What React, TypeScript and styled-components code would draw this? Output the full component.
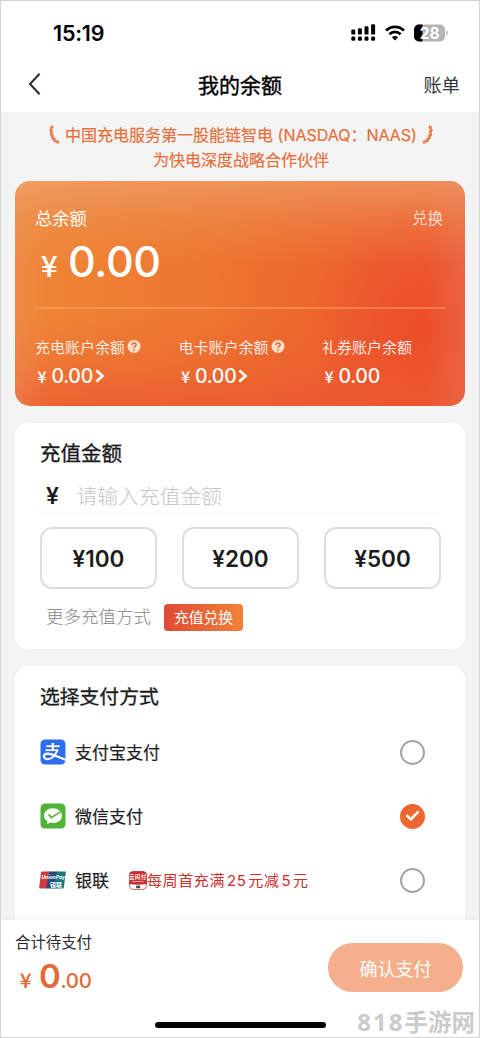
import React from 'react';
import styled, { createGlobalStyle } from 'styled-components';

const GlobalStyle = createGlobalStyle`
  * { box-sizing: border-box; }
  body { margin: 0; background: #fff; }
  button { font-family: inherit; padding: 0; margin: 0; cursor: pointer; }
`;

const Screen = styled.div`
  width: 480px;
  height: 1038px;
  border: 1px solid #d4d4d4;
  background: #f4f4f4;
  display: flex;
  flex-direction: column;
  overflow: hidden;
  position: relative;
  font-family: Inter, 'Noto Sans CJK SC', sans-serif;
  color: #1c1c1e;
  white-space: nowrap;
`;

const StatusBar = styled.div`
  flex: none;
  height: 56px;
  padding: 7px 31px 0 52px;
  display: flex;
  align-items: center;
  justify-content: space-between;
  background: #fff;
`;

const Clock = styled.span`
  font-size: 21.5px;
  font-weight: 600;
  letter-spacing: -0.2px;
  color: #000;
`;

const StatusIcons = styled.div`
  display: flex;
  align-items: center;
  gap: 9px;
`;

const NavBar = styled.div`
  flex: none;
  height: 55px;
  padding: 0 19px 2px 25px;
  display: grid;
  grid-template-columns: 60px 1fr 66px;
  align-items: center;
  background: #fff;
`;

const NavTitle = styled.span`
  text-align: center;
  font-size: 21px;
  -webkit-text-stroke: 0.4px #000;
  color: #000;
`;

const NavAction = styled.span`
  text-align: right;
  font-size: 18.2px;
  color: #33333b;
`;

const Banner = styled.div`
  flex: none;
  height: 69px;
  padding: 11px 0 0 2px;
  display: flex;
  flex-direction: column;
  align-items: center;
  color: #e4703c;
  font-size: 16px;
  line-height: 24px;
  -webkit-text-stroke: 0.2px #e4703c;
`;

const BannerLine = styled.div`
  display: flex;
  align-items: center;
  height: 24.5px;
  gap: 5px;
`;

const BalanceCard = styled.section`
  flex: none;
  width: 450px;
  height: 225px;
  margin-left: 14px;
  border-radius: 15px;
  padding: 0 20px;
  color: #fff;
  display: flex;
  flex-direction: column;
  background:
    linear-gradient(to bottom, rgba(240, 168, 116, 0.62) 0, rgba(238, 160, 102, 0.3) 36px, rgba(238, 150, 90, 0) 84px),
    linear-gradient(to right, rgba(238, 142, 90, 0.45) 0, rgba(238, 142, 90, 0) 34px),
    linear-gradient(to left, rgba(234, 110, 82, 0.6) 0, rgba(234, 104, 74, 0) 38px),
    linear-gradient(to top, rgba(236, 86, 48, 0.75) 0, rgba(236, 86, 48, 0.3) 42px, rgba(236, 86, 48, 0) 90px),
    radial-gradient(ellipse 215px 250px at 410px 155px, rgba(236, 72, 40, 0.9) 0, rgba(236, 74, 41, 0.66) 25%, rgba(236, 78, 41, 0.26) 55%, rgba(236, 84, 41, 0) 100%),
    linear-gradient(to right, #ef8736 0, #ed7630 42%, #ec6830 100%);
`;

const CardHead = styled.div`
  height: 32px;
  margin-top: 20px;
  display: flex;
  align-items: center;
  justify-content: space-between;
  font-size: 17.3px;
  padding-right: 2px;
`;

const Redeem = styled.span`
  font-size: 15.5px;
  opacity: 0.72;
`;

const Total = styled.div`
  display: flex;
  align-items: baseline;
  height: 74px;
  padding: 1px 0 0 4px;
  line-height: 54px;
  font-size: 43px;
  font-weight: 500;
  letter-spacing: -0.3px;
`;

const Yen = styled.span<{ $size: number; $gap: number; $width?: number }>`
  font-family: 'Noto Sans CJK SC', sans-serif;
  font-size: ${(p) => p.$size}px;
  margin-right: ${(p) => p.$gap}px;
  display: inline-block;
  width: ${(p) => (p.$width ? `${p.$width}px` : 'auto')};
  text-align: center;
  -webkit-text-stroke: 0.2px currentColor;
`;

const CardRule = styled.div`
  height: 2px;
  background: rgba(255, 176, 112, 0.42);
`;

const Accounts = styled.div`
  display: grid;
  grid-template-columns: 143.5px 143.5px auto;
  margin-top: 24px;
`;

const AccountLabel = styled.div`
  display: flex;
  align-items: center;
  gap: 2px;
  height: 26px;
  font-size: 15px;
  color: rgba(255, 255, 255, 0.88);
`;

const AccountValue = styled.div`
  display: flex;
  align-items: center;
  height: 34px;
  padding-left: 1px;
  font-size: 19.5px;
  font-weight: 500;
  letter-spacing: -0.3px;
`;

const Panel = styled.section<{ $height: number }>`
  flex: none;
  width: 450px;
  height: ${(p) => p.$height}px;
  margin: 17px 0 0 14px;
  padding: 0 24px 0 25px;
  background: #fff;
  border-radius: 14px;
`;

const PanelTitle = styled.h2<{ $size: number; $height: number }>`
  margin: 0;
  height: ${(p) => p.$height}px;
  line-height: 62px;
  font-size: ${(p) => p.$size}px;
  font-weight: 400;
  -webkit-text-stroke: 0.35px #1c1c1e;
`;

const AmountField = styled.div`
  height: 35px;
  padding-bottom: 2px;
  display: flex;
  align-items: center;
  border-bottom: 1px solid #f7f7f7;
`;

const FieldYen = styled.span`
  width: 25px;
  text-align: center;
  font-size: 23px;
  font-weight: 600;
`;

const Placeholder = styled.span`
  margin: -3px 0 0 11.5px;
  font-size: 20.8px;
  font-weight: 300;
  color: #c6c6c6;
`;

const Presets = styled.div`
  margin-top: 12px;
  display: flex;
  justify-content: space-between;
`;

const Preset = styled.button`
  width: 117px;
  height: 62px;
  border: 2px solid #dedede;
  border-radius: 12px;
  background: #fff;
  font-size: 22.5px;
  font-weight: 600;
  color: #1c1c1e;
`;

const MoreRow = styled.div`
  height: 28px;
  margin-top: 14px;
  padding-left: 6px;
  display: flex;
  align-items: center;
  gap: 13px;
  line-height: 28px;
  font-size: 17.5px;
  font-weight: 300;
  color: #858585;
`;

const Tag = styled.span`
  width: 79px;
  height: 27px;
  line-height: 28px;
  border-radius: 4px;
  text-align: center;
  font-size: 14.8px;
  font-weight: 400;
  color: #fff;
  background: linear-gradient(90deg, #e04a35, #f08238);
`;

const PayRow = styled.div`
  height: 64px;
  display: flex;
  align-items: center;
  padding-right: 16px;
`;

const PayIcon = styled.div`
  width: 27px;
  height: 26px;
  margin: 0 9px 0 -1px;
  display: flex;
  align-items: center;
  justify-content: center;
`;

const PayName = styled.span`
  margin-top: -1px;
  font-size: 17px;
  -webkit-text-stroke: 0.2px #1c1c1e;
`;

const Promo = styled.span`
  display: flex;
  align-items: center;
  margin-left: 20px;
  line-height: 22px;
  font-size: 15px;
  letter-spacing: 0.6px;
  word-spacing: -2.9px;
  color: #c8312f;
`;

const PromoText = styled.span`
  margin-top: 1px;
`;

const Radio = styled.span<{ $on?: boolean }>`
  width: 25px;
  height: 25px;
  margin-left: auto;
  border-radius: 50%;
  border: ${(p) => (p.$on ? 'none' : '2px solid #a4a4a4')};
  background: ${(p) => (p.$on ? '#ec682e' : '#fff')};
  display: flex;
  align-items: center;
  justify-content: center;
`;

const Footer = styled.footer`
  position: absolute;
  left: 0;
  right: 0;
  bottom: 0;
  height: 117px;
  background: #fff;
  box-shadow: 0 -1px 8px rgba(0, 0, 0, 0.05);
  padding: 9px 16px 0 14px;
  display: flex;
  justify-content: space-between;
`;

const DueLabel = styled.div`
  height: 26px;
  line-height: 27px;
  font-size: 15.4px;
  color: #2c2c2e;
`;

const DueAmount = styled.div`
  display: flex;
  align-items: baseline;
  line-height: 42px;
  padding-left: 2px;
  color: #e26a35;
  font-size: 20.5px;
  font-weight: 500;
  letter-spacing: -0.3px;
`;

const DueWhole = styled.span`
  font-size: 33px;
  font-weight: 600;
`;

const Confirm = styled.button`
  width: 135px;
  height: 49px;
  margin-top: 14px;
  border: 0;
  border-radius: 25px;
  background: #f4b08c;
  color: #fff;
  font-size: 18px;
`;

const HomeBar = styled.div`
  position: absolute;
  left: 154px;
  bottom: 9px;
  width: 171px;
  height: 6px;
  border-radius: 3px;
  background: #000;
`;

const Watermark = styled.div`
  position: absolute;
  right: 4px;
  bottom: -1px;
  line-height: 32px;
  display: flex;
  align-items: center;
  font-family: 'Open Sans', 'Noto Sans CJK SC', sans-serif;
  font-size: 23.5px;
  font-weight: 700;
  color: #cbcbcb;
`;

const WatermarkDigits = styled.span`
  font-size: 24px;
  letter-spacing: 2px;
`;

const Signal = () => (
  <svg width="25" height="18" viewBox="0 0 25 18" fill="#000">
    {[0, 1, 2, 3].map((i) => (
      <g key={i}>
        <rect x={0.3 + i * 6.6} y={[5.6, 4.2, 2.2, 0.2][i]} width="4" height={[5, 6.4, 8.4, 10.4][i]} rx="1.2" />
        <rect x={0.3 + i * 6.6} y="12.6" width="4" height="4.2" rx="1.4" />
      </g>
    ))}
  </svg>
);

const Wifi = () => (
  <svg width="20" height="16" viewBox="0 0 20 16" fill="none" stroke="#000" strokeWidth="2.7">
    <path d="M1 5.6 C6 .5 14 .5 19 5.6" />
    <path d="M4.4 9.2 C7.6 6 12.4 6 15.6 9.2" />
    <path d="M10 15.6 L6.9 12.3 C8.6 10.7 11.4 10.7 13.1 12.3 Z" fill="#000" stroke="none" />
  </svg>
);

const Battery = () => (
  <svg width="34" height="18" viewBox="0 0 34 18">
    <defs>
      <clipPath id="cell"><rect x="0" y="0.5" width="31" height="17" rx="5" /></clipPath>
    </defs>
    <g clipPath="url(#cell)">
      <rect width="31" height="18" fill="#b4b4b4" />
      <rect width="8.5" height="18" fill="#000" />
    </g>
    <path d="M32.2 6.3 C34.3 7 34.3 11 32.2 11.7 Z" fill="#b4b4b4" />
    <text x="15.6" y="14.6" textAnchor="middle" fontFamily="Inter" fontWeight="700" fontSize="15.5" fill="#fff">28</text>
  </svg>
);

const Back = () => (
  <svg width="16" height="24" viewBox="0 0 16 24" fill="none" stroke="#2d2d38" strokeWidth="2.1">
    <path d="M13.6 1.8 L4 12 L13.6 22.2" />
  </svg>
);

const Laurel = ({ flip }: { flip?: boolean }) => (
  <svg width="11" height="20" viewBox="0 0 11 20" fill="none" strokeLinecap="round">
    <g transform={flip ? 'translate(11 0) scale(-1 1)' : undefined}>
      <path d="M2.6 2.4 C1.8 8.4 3.6 14.4 8.8 17.2" stroke="#ea8a5e" strokeWidth="3.2" />
      <path d="M3.6 .8 V3 M.9 5.2 L3 7.4 M1.3 9 L3.6 11 M2.6 12.8 L5 14.2 M4.6 16 L7.4 16.8" stroke="#e27645" strokeWidth="1.1" />
      <path d="M3.2 4.6 L4.8 3.6 M3.4 8.6 L5 7.6 M4.6 12.4 L6 11.2 M7 15.4 L7.6 14" stroke="#f4f4f4" strokeWidth=".8" />
    </g>
  </svg>
);

const Help = () => (
  <svg width="14" height="14" viewBox="0 0 14 14">
    <circle cx="7" cy="7.4" r="6.5" fill="#fbdcc6" />
    <path d="M4.9 5.9 C5 3.2 9.3 3.3 9.2 5.8 C9.1 7.3 7 7.3 7 8.9" fill="none" stroke="#ea6c34" strokeWidth="1.5" />
    <circle cx="7" cy="11" r=".95" fill="#ea6c34" />
  </svg>
);

const Chevron = () => (
  <svg width="12" height="14" viewBox="0 0 12 14" fill="none" stroke="#fff" strokeWidth="2.7">
    <path d="M3.4 1.4 L9.6 7 L3.4 12.6" />
  </svg>
);

const Alipay = () => (
  <svg width="26" height="26" viewBox="0 0 26 26">
    <rect x=".5" y=".5" width="25" height="25" rx="4.5" fill="#2f6ef0" />
    <g fill="none" stroke="#fff">
      <path d="M6.3 7.2 H19.6" strokeWidth="1.8" />
      <path d="M5.5 11.2 H18.3" strokeWidth="1.7" />
      <path d="M12.8 4 V11" strokeWidth="2.4" />
      <path d="M17.4 11 C15.8 15.5 12.2 20.2 7.6 20.2 C2.6 20.2 2.8 14.6 7.6 14.6 C12 14.6 18 18.2 25.5 20.8" strokeWidth="2.1" />
    </g>
  </svg>
);

const WechatPay = () => (
  <svg width="26" height="26" viewBox="0 0 26 26">
    <rect x=".5" y=".5" width="25" height="25" rx="4.5" fill="#50b436" />
    <path d="M13 5.2 C18 5.2 22 8.5 22 12.7 C22 17 18 20 13 20 C12 20 11 19.9 10.2 19.6 L7.2 21.2 L7.5 18.3 C5.4 17 4 15 4 12.7 C4 8.5 8 5.2 13 5.2 Z" fill="#fff" />
    <path d="M8.6 11.4 L11.4 14.6 L20.4 8.9" fill="none" stroke="#50b436" strokeWidth="1.7" />
  </svg>
);

const UnionPay = () => (
  <svg width="27" height="18" viewBox="0 0 27 18">
    <path d="M3 .5 H11 L8 17.5 H1.2 Q0 17.5 .2 16.2 L2 1.6 Q2.2 .5 3 .5 Z" fill="#cf3b3d" />
    <path d="M10 .5 H19 L16 17.5 H7.2 Z" fill="#244e7c" />
    <path d="M18.2 .5 H26 Q27 .5 26.8 1.6 L24.8 16.4 Q24.6 17.5 23.5 17.5 H15.4 Z" fill="#16797f" />
    <text x="2.4" y="8.4" fontFamily="Inter" fontSize="5" fontWeight="700" fontStyle="italic" fill="#fff">UnionPay</text>
    <text x="11" y="15.6" fontFamily="Noto Sans CJK SC" fontSize="6" fontWeight="700" fill="#fff">银联</text>
  </svg>
);

const PromoBadge = () => (
  <svg width="18" height="19" viewBox="0 0 18 19">
    <rect x=".5" y=".5" width="17" height="18" rx="4" fill="#fff" stroke="#b95a58" strokeWidth=".9" />
    <path d="M.2 13 V4.5 Q.2 .3 4.5 .3 H13.5 Q17.8 .3 17.8 4.5 V13 Q9 14.6 .2 13 Z" fill="#c9302f" />
    <text x="9" y="8.4" textAnchor="middle" fontFamily="Noto Sans CJK SC" fontSize="5.2" fontWeight="700" fill="#fff">云闪付</text>
    <path d="M3.4 10.5 H14.6" stroke="#e99c98" strokeWidth="1" />
    <rect x="7.2" y="14.6" width="4" height="2.6" fill="#3c4a57" />
  </svg>
);

const Check = () => (
  <svg width="15" height="12" viewBox="0 0 15 12" fill="none" stroke="#fff" strokeWidth="2.6" strokeLinecap="round" strokeLinejoin="round">
    <path d="M2.2 5.8 L5.8 9.4 L12.8 2.2" />
  </svg>
);

const accounts = [
  { label: '充电账户余额', link: true },
  { label: '电卡账户余额', link: true },
  { label: '礼券账户余额', link: false },
];

export default function App() {
  return (
    <Screen>
      <GlobalStyle />
      <StatusBar>
        <Clock>15:19</Clock>
        <StatusIcons>
          <Signal />
          <Wifi />
          <Battery />
        </StatusIcons>
      </StatusBar>
      <NavBar>
        <Back />
        <NavTitle>我的余额</NavTitle>
        <NavAction>账单</NavAction>
      </NavBar>
      <Banner>
        <BannerLine>
          <Laurel />
          <span>中国充电服务第一股能链智电 (NASDAQ：NAAS)</span>
          <Laurel flip />
        </BannerLine>
        <BannerLine>为快电深度战略合作伙伴</BannerLine>
      </Banner>
      <BalanceCard>
        <CardHead>
          <span>总余额</span>
          <Redeem>兑换</Redeem>
        </CardHead>
        <Total>
          <Yen $size={29} $gap={9} $width={20}>¥</Yen>0.00
        </Total>
        <CardRule />
        <Accounts>
          {accounts.map((a) => (
            <div key={a.label}>
              <AccountLabel>
                {a.label}
                {a.link && <Help />}
              </AccountLabel>
              <AccountValue>
                <Yen $size={15} $gap={3.5} $width={12}>¥</Yen>0.00
                {a.link && <Chevron />}
              </AccountValue>
            </div>
          ))}
        </Accounts>
      </BalanceCard>
      <Panel $height={226}>
        <PanelTitle $size={20.5} $height={57}>充值金额</PanelTitle>
        <AmountField>
          <FieldYen>¥</FieldYen>
          <Placeholder>请输入充值金额</Placeholder>
        </AmountField>
        <Presets>
          <Preset>¥100</Preset>
          <Preset>¥200</Preset>
          <Preset>¥500</Preset>
        </Presets>
        <MoreRow>
          更多充值方式
          <Tag>充值兑换</Tag>
        </MoreRow>
      </Panel>
      <Panel $height={300}>
        <PanelTitle $size={19.8} $height={54}>选择支付方式</PanelTitle>
        <PayRow>
          <PayIcon><Alipay /></PayIcon>
          <PayName>支付宝支付</PayName>
          <Radio />
        </PayRow>
        <PayRow>
          <PayIcon><WechatPay /></PayIcon>
          <PayName>微信支付</PayName>
          <Radio $on><Check /></Radio>
        </PayRow>
        <PayRow>
          <PayIcon><UnionPay /></PayIcon>
          <PayName>银联</PayName>
          <Promo>
            <PromoBadge />
            <PromoText>每周首充满 25 元减 5 元</PromoText>
          </Promo>
          <Radio />
        </PayRow>
      </Panel>
      <Footer>
        <div>
          <DueLabel>合计待支付</DueLabel>
          <DueAmount>
            <Yen $size={20} $gap={5} $width={17}>¥</Yen>
            <DueWhole>0</DueWhole>.00
          </DueAmount>
        </div>
        <Confirm>确认支付</Confirm>
        <HomeBar />
        <Watermark><WatermarkDigits>818</WatermarkDigits>手游网</Watermark>
      </Footer>
    </Screen>
  );
}
